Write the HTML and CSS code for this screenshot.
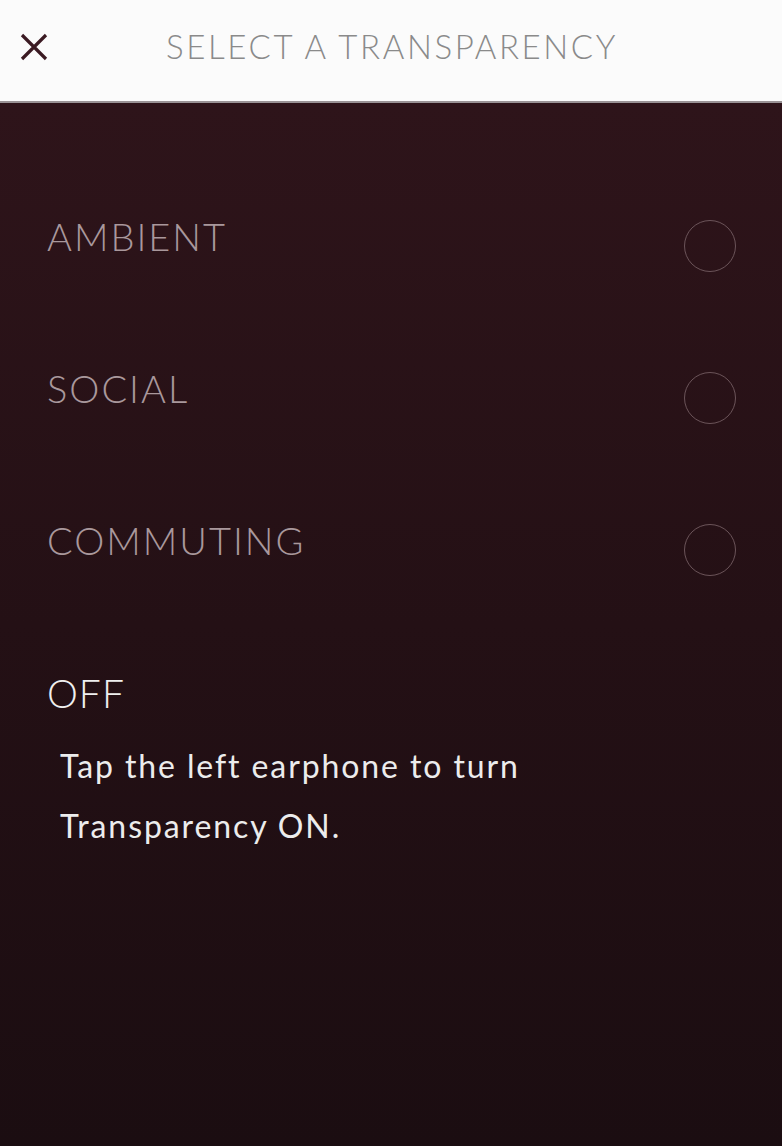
FILE: index.html
```html
<!DOCTYPE html>
<html>
<head>
<meta charset="utf-8">
<link rel="stylesheet" href="styles.css">
</head>
<body>
<div class="screen">
  <header class="topbar">
    <svg class="close" width="28" height="28" viewBox="0 0 28 28"><path d="M2 2 L26 26 M26 2 L2 26" stroke="#3b1a22" stroke-width="3.2" fill="none"/></svg>
    <h1 class="title">SELECT A TRANSPARENCY</h1>
  </header>
  <main class="content">
    <ul class="options">
      <li class="option"><span class="label">AMBIENT</span><span class="radio"></span></li>
      <li class="option"><span class="label">SOCIAL</span><span class="radio"></span></li>
      <li class="option"><span class="label">COMMUTING</span><span class="radio"></span></li>
    </ul>
    <div class="off">
      <div class="off-title">OFF</div>
      <p class="off-text">Tap the left earphone to turn<br>Transparency ON.</p>
    </div>
  </main>
</div>
</body>
</html>
```
FILE: styles.css
```css
* { box-sizing: border-box; }
html, body { margin: 0; padding: 0; }
body { width: 782px; height: 1146px; overflow: hidden; font-family: "Lato", "Liberation Sans", sans-serif; }
.screen { width: 782px; height: 1146px; display: flex; flex-direction: column; }
.topbar {
  height: 103px; background: #fbfbfb; display: flex; align-items: flex-start;
  position: relative; border-bottom: 2px solid #9a9396;
}
.close { position: absolute; left: 20px; top: 33px; }
.title {
  margin: 0 auto; font-weight: 300; font-size: 33px; letter-spacing: 2.6px;
  color: #8a8a8a; line-height: 40px; padding-top: 26px; padding-left: 2px;
}
.content {
  flex: 1; background: linear-gradient(180deg, #2e141a 0%, #241015 50%, #1b0d11 100%);
  padding: 0 46px 0 47px;
}
.options { list-style: none; margin: 0; padding: 110px 0 0; }
.option { height: 152px; display: flex; justify-content: space-between; align-items: flex-start; }
.label { font-weight: 300; font-size: 38px; letter-spacing: 2px; color: #a9989c; line-height: 46px; }
.radio { width: 52px; height: 52px; border-radius: 50%; border: 1.6px solid #6b5459; margin-top: 7px; }
.off-title { font-weight: 300; font-size: 39px; color: #efefef; line-height: 46px; margin-top: 1px; letter-spacing: 1px; }
.off-text { margin: 20px 0 0 13px; font-size: 32px; line-height: 60px; color: #ececec; font-weight: 400; letter-spacing: 1.9px; }
```
